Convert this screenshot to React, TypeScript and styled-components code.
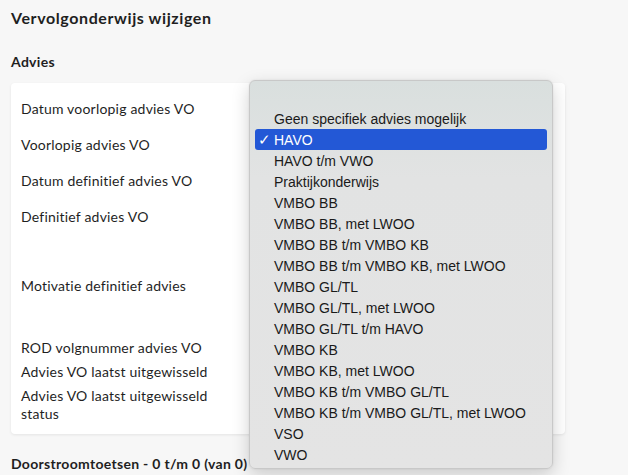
import React from "react";
import styled, { createGlobalStyle } from "styled-components";

const Global = createGlobalStyle`
  html, body { margin: 0; padding: 0; }
  body {
    background: #f7f7f7;
    font-family: Lato, "Open Sans", sans-serif;
    color: #1f1f1f;
    width: 628px;
    height: 475px;
    overflow: hidden;
  }
`;

const Page = styled.div`
  position: relative;
  padding: 7px 11px 0 11px;
  width: 628px;
  height: 475px;
  box-sizing: border-box;
`;

const Title = styled.h1`
  margin: 0;
  font-size: 16px;
  font-weight: 700;
  line-height: 22px;
  letter-spacing: 0.6px;
`;

const Section = styled.h2`
  margin: 22px 0 0 0;
  font-size: 14px;
  font-weight: 700;
  line-height: 22px;
  letter-spacing: 0.3px;
`;

const Card = styled.div`
  margin-top: 10px;
  width: 554px;
  background: #fff;
  border-radius: 4px;
  box-shadow: 0 1px 3px rgba(0, 0, 0, 0.08);
  padding: 8px 10px 8px 10px;
  box-sizing: border-box;
  display: flex;
  flex-direction: column;
`;

const Row = styled.div<{ $h: number }>`
  height: ${(p) => p.$h}px;
  display: flex;
  align-items: center;
  font-size: 14px;
  line-height: 18px;
  letter-spacing: 0.2px;
`;

const Label = styled.div`
  width: 215px;
`;

const Footer = styled.h2`
  margin: 19px 0 0 0;
  font-size: 14px;
  font-weight: 700;
  line-height: 22px;
  letter-spacing: 0.3px;
`;

const Menu = styled.ul`
  position: absolute;
  left: 249px;
  top: 80px;
  width: 304px;
  height: 389px;
  box-sizing: border-box;
  margin: 0;
  padding: 6px 5px 5px 5px;
  list-style: none;
  border: 1px solid #c8c8c8;
  border-radius: 6px;
  background: linear-gradient(180deg, #d9dfde 0%, #e2e3e3 25%, #e4e4e4 100%);
  box-shadow: 0 6px 18px rgba(0, 0, 0, 0.18), 0 0 2px rgba(0, 0, 0, 0.1);
  font-family: "Liberation Sans", Arial, sans-serif;
  font-size: 14px;
  color: #1a1a1a;
`;

const Item = styled.li<{ $selected?: boolean }>`
  height: 21px;
  display: flex;
  align-items: center;
  padding-left: 19px;
  position: relative;
  border-radius: 3px;
  background: ${(p) => (p.$selected ? "#2358d6" : "transparent")};
  color: ${(p) => (p.$selected ? "#fff" : "inherit")};
`;

const Check = styled.span`
  position: absolute;
  left: 3px;
  top: 0;
  line-height: 21px;
  font-size: 15px;
`;

const options = [
  "",
  "Geen specifiek advies mogelijk",
  "HAVO",
  "HAVO t/m VWO",
  "Praktijkonderwijs",
  "VMBO BB",
  "VMBO BB, met LWOO",
  "VMBO BB t/m VMBO KB",
  "VMBO BB t/m VMBO KB, met LWOO",
  "VMBO GL/TL",
  "VMBO GL/TL, met LWOO",
  "VMBO GL/TL t/m HAVO",
  "VMBO KB",
  "VMBO KB, met LWOO",
  "VMBO KB t/m VMBO GL/TL",
  "VMBO KB t/m VMBO GL/TL, met LWOO",
  "VSO",
  "VWO",
];

const rows: { label: React.ReactNode; h: number }[] = [
  { label: "Datum voorlopig advies VO", h: 36 },
  { label: "Voorlopig advies VO", h: 36 },
  { label: "Datum definitief advies VO", h: 36 },
  { label: "Definitief advies VO", h: 36 },
  { label: "Motivatie definitief advies", h: 101 },
  { label: "ROD volgnummer advies VO", h: 24 },
  { label: "Advies VO laatst uitgewisseld", h: 24 },
  { label: <>Advies VO laatst uitgewisseld<br />status</>, h: 42 },
];

export default function App() {
  return (
    <>
      <Global />
      <Page>
        <Title>Vervolgonderwijs wijzigen</Title>
        <Section>Advies</Section>
        <Card>
          {rows.map((r, i) => (
            <Row key={i} $h={r.h}>
              <Label>{r.label}</Label>
            </Row>
          ))}
        </Card>
        <Footer>Doorstroomtoetsen - 0 t/m 0 (van 0)</Footer>
        <Menu>
          {options.map((o, i) => (
            <Item key={i} $selected={o === "HAVO"}>
              {o === "HAVO" && <Check>✓</Check>}
              {o}
            </Item>
          ))}
        </Menu>
      </Page>
    </>
  );
}
